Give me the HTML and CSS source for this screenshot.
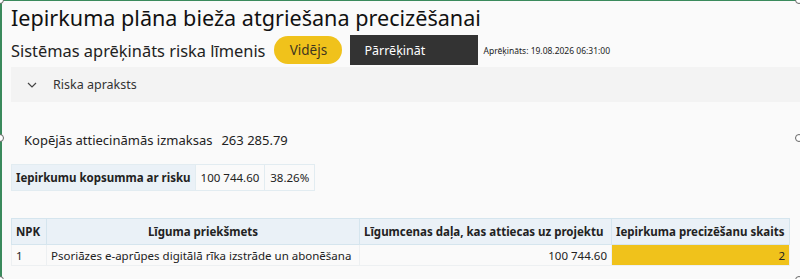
FILE: index.html
```html
<!DOCTYPE html>
<html lang="lv">
<head>
  <meta charset="UTF-8" />
  <title>Iepirkuma plāna bieža atgriešana precizēšanai</title>
  <link rel="stylesheet" href="styles.css">
</head>
<body>
  <div class="frame">
    <span class="handle h-tl"></span>
    <span class="handle h-tr"></span>
    <span class="handle h-ml"></span>
    <span class="handle h-mr"></span>
    <span class="handle h-bl"></span>
    <span class="handle h-br"></span>

    <h1 class="title">Iepirkuma plāna bieža atgriešana precizēšanai</h1>

    <div class="risk-row">
      <span class="risk-label">Sistēmas aprēķināts riska līmenis</span>
      <span class="pill">Vidējs</span>
      <button class="recalc">Pārrēķināt</button>
      <span class="calc-time">Aprēķināts: 19.08.2026 06:31:00</span>
    </div>

    <div class="accordion">
      <svg class="chevron" width="10" height="6" viewBox="0 0 10 6">
        <path d="M1 1 L5 5 L9 1" fill="none" stroke="#444" stroke-width="1.2"/>
      </svg>
      <span>Riska apraksts</span>
    </div>

    <div class="total">
      <span>Kopējās attiecināmās izmaksas</span>
      <span>263 285.79</span>
    </div>

    <table class="grid summary">
      <tr>
        <th>Iepirkumu kopsumma ar risku</th>
        <td>100 744.60</td>
        <td>38.26%</td>
      </tr>
    </table>

    <table class="grid main">
      <colgroup>
        <col class="col-npk">
        <col class="col-subject">
        <col class="col-price">
        <col class="col-count">
      </colgroup>
      <thead>
        <tr>
          <th>NPK</th>
          <th class="center">Līguma priekšmets</th>
          <th>Līgumcenas daļa, kas attiecas uz projektu</th>
          <th>Iepirkuma precizēšanu skaits</th>
        </tr>
      </thead>
      <tbody>
        <tr>
          <td>1</td>
          <td>Psoriāzes e-aprūpes digitālā rīka izstrāde un abonēšana</td>
          <td class="num">100 744.60</td>
          <td class="num warn">2</td>
        </tr>
      </tbody>
    </table>
  </div>
</body>
</html>
```

FILE: styles.css
```css
html, body {
  margin: 0;
  padding: 0;
  height: 100%;
}

body {
  font-family: 'Noto Sans', 'Open Sans', sans-serif;
  background-color: #fafafa;
  color: #252525;
}

.frame {
  position: relative;
  box-sizing: border-box;
  height: 279px;
  padding: 0 0 0 9px;
  border-top: 1px solid #3a8a5c;
  border-left: 2px solid #3a8a5c;
}

.handle {
  position: absolute;
  width: 6px;
  height: 6px;
  border: 1px solid #666;
  border-radius: 50%;
  background: #fff;
}

.h-tl { left: -6px; top: -5px; }
.h-tr { right: -3px; top: -5px; }
.h-ml { left: -6px; top: 133px; }
.h-mr { right: -3px; top: 133px; }
.h-bl { left: -6px; bottom: -5px; }
.h-br { right: -3px; bottom: -5px; }

.title {
  margin: 0;
  padding-top: 2px;
  font-size: 21.6px;
  font-weight: normal;
  line-height: 30px;
  color: #111;
}

.risk-row {
  display: flex;
  align-items: center;
  height: 30px;
  margin-top: 2px;
}

.risk-label {
  font-size: 16.4px;
  color: #222;
}

.pill {
  margin-left: 9px;
  width: 68px;
  height: 28px;
  line-height: 28px;
  border-radius: 14px;
  background: #f0c21b;
  text-align: center;
  font-size: 13.5px;
  color: #3d3520;
}

.recalc {
  margin-left: 8px;
  width: 128px;
  height: 30px;
  padding: 0 0 0 14px;
  border: none;
  background: #333;
  color: #fff;
  text-align: left;
  font-family: inherit;
  font-size: 12.5px;
}

.calc-time {
  margin-left: 5px;
  font-size: 8.5px;
  color: #222;
}

.accordion {
  display: flex;
  align-items: center;
  height: 35px;
  margin-top: 2px;
  background: #f3f3f3;
  font-size: 12.5px;
  color: #333;
}

.chevron {
  margin-left: 16px;
  margin-right: 16px;
}

.total {
  display: flex;
  gap: 9px;
  padding: 29px 0 0 13px;
  font-size: 13px;
  color: #222;
}

.grid {
  border-collapse: collapse;
  font-size: 11.5px;
  color: #222;
}

.grid th,
.grid td {
  border: 1px solid #e2ecf1;
  padding: 0 5px;
  white-space: nowrap;
}

.grid th {
  background: #eaf1f7;
  font-weight: bold;
  text-align: left;
  padding: 0 4px;
}

.summary {
  margin-top: 15px;
}

.summary th,
.summary td {
  height: 25px;
}

.main {
  table-layout: fixed;
  margin-top: 27px;
  width: 778px;
}

.main th {
  height: 25px;
  border-color: #d5e5ee;
}

.main td {
  height: 20px;
  padding: 0 4px;
  border-color: #edf0f2;
}

.main th.center {
  text-align: center;
}

.col-npk { width: 35px; }
.col-subject { width: 313px; }
.col-price { width: 252px; }
.col-count { width: 178px; }

.num {
  text-align: right;
}

.warn {
  background: #f0c21b;
}
```
